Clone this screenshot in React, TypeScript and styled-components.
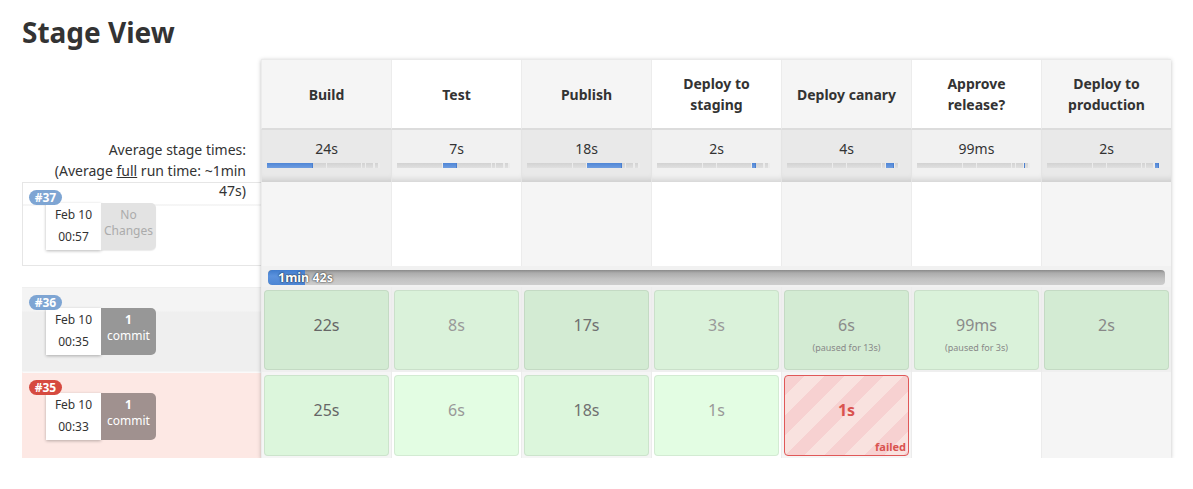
import React from 'react';
import styled, { createGlobalStyle } from 'styled-components';

const GlobalStyle = createGlobalStyle`
  html, body { margin: 0; padding: 0; background: #fff; }
  body { font-family: "Noto Sans", "Open Sans", sans-serif; color: #333; }
`;

type Stage = { name: React.ReactNode; avg: string; seg: number };
const stages: Stage[] = [
  { name: 'Build', avg: '24s', seg: 0 },
  { name: 'Test', avg: '7s', seg: 1 },
  { name: 'Publish', avg: '18s', seg: 2 },
  { name: <>Deploy to<br />staging</>, avg: '2s', seg: 3 },
  { name: 'Deploy canary', avg: '4s', seg: 4 },
  { name: <>Approve<br />release?</>, avg: '99ms', seg: 5 },
  { name: <>Deploy to<br />production</>, avg: '2s', seg: 6 },
];
const segWidths = [46, 14, 35, 4, 8, 1, 4, 1];

type Cell =
  | { kind: 'ok'; t: string; c: string; paused?: string }
  | { kind: 'failed'; t: string }
  | { kind: 'empty' };

type Run = {
  id: string;
  failed?: boolean;
  date: string;
  time: string;
  changes: 'none' | 'commit';
  tone: 'white' | 'gray' | 'pink';
  height: number;
  cells: Cell[];
};

const runs: Run[] = [
  {
    id: '#37', date: 'Feb 10', time: '00:57', changes: 'none', tone: 'white', height: 84,
    cells: Array.from({ length: 7 }, () => ({ kind: 'empty' } as Cell)),
  },
  {
    id: '#36', date: 'Feb 10', time: '00:35', changes: 'commit', tone: 'gray', height: 85,
    cells: [
      { kind: 'ok', t: '22s', c: '#666' },
      { kind: 'ok', t: '8s', c: '#999' },
      { kind: 'ok', t: '17s', c: '#707070' },
      { kind: 'ok', t: '3s', c: '#999' },
      { kind: 'ok', t: '6s', c: '#8a8a8a', paused: '(paused for 13s)' },
      { kind: 'ok', t: '99ms', c: '#8a8a8a', paused: '(paused for 3s)' },
      { kind: 'ok', t: '2s', c: '#888' },
    ],
  },
  {
    id: '#35', failed: true, date: 'Feb 10', time: '00:33', changes: 'commit', tone: 'pink', height: 86,
    cells: [
      { kind: 'ok', t: '25s', c: '#666' },
      { kind: 'ok', t: '6s', c: '#999' },
      { kind: 'ok', t: '18s', c: '#707070' },
      { kind: 'ok', t: '1s', c: '#999' },
      { kind: 'failed', t: '1s' },
      { kind: 'empty' },
      { kind: 'empty' },
    ],
  },
];

const Page = styled.div`
  padding: 14px 22px 0 22px;
`;

const Title = styled.h2`
  margin: 0 0 9px 0;
  font-size: 28px;
  line-height: 36px;
  font-weight: 700;
  color: #333;
`;

const Main = styled.div`
  display: flex;
  align-items: flex-start;
`;

const LeftCol = styled.div`
  width: 239px;
  display: flex;
  flex-direction: column;
  flex-shrink: 0;
`;

const Spacer = styled.div<{ $h: number }>`
  height: ${(p) => p.$h}px;
`;

const AvgLabel = styled.div`
  position: relative;
  z-index: 2;
  height: 52px;
  box-sizing: border-box;
  padding: 10px 15px 0 0;
  text-align: right;
  font-size: 14px;
  line-height: 20.5px;
  color: #333;
  overflow: visible;
  white-space: nowrap;
  u { text-decoration: underline; }
`;

const toneBg: Record<Run['tone'], string> = {
  white: 'linear-gradient(to bottom, #fff 0, #fff 21px, #ececec 22px, #fff 23px, #fff 100%)',
  gray: 'linear-gradient(to bottom, #f4f4f4 0, #f4f4f4 23px, #efefef 24px, #efefef 100%)',
  pink: '#fde8e4',
};

const RunInfo = styled.div<{ $tone: Run['tone']; $h: number }>`
  height: ${(p) => p.$h}px;
  box-sizing: border-box;
  background: ${(p) => toneBg[p.$tone]};
  border: 1px solid ${(p) => (p.$tone === 'white' ? '#e6e6e6' : 'transparent')};
  border-right: none;
  border-top-color: ${(p) => (p.$tone === 'pink' ? '#fafafa' : p.$tone === 'white' ? '#e6e6e6' : 'transparent')};
  padding: 7px 0 0 6px;
  display: flex;
  flex-direction: column;
  align-items: flex-start;
`;

const Badge = styled.div<{ $failed?: boolean }>`
  position: relative;
  z-index: 1;
  width: 33px;
  height: 15px;
  border-radius: 8px;
  background: ${(p) => (p.$failed ? '#d64a40' : '#7ea5d3')};
  color: #fff;
  font-size: 12px;
  font-weight: 700;
  line-height: 15px;
  text-align: center;
`;

const BuildBoxes = styled.div`
  display: flex;
  margin: -2px 0 0 17px;
`;

const DateBox = styled.div`
  width: 55px;
  height: 47px;
  box-sizing: border-box;
  background: #fff;
  box-shadow: 0 1px 3px rgba(0, 0, 0, 0.28);
  padding-top: 1px;
  font-size: 12px;
  line-height: 22px;
  text-align: center;
  color: #333;
`;

const ChangesBox = styled.div<{ $kind: 'none' | 'commit'; $tone: Run['tone'] }>`
  width: 55px;
  height: 47px;
  box-sizing: border-box;
  border-radius: 0 5px 5px 0;
  padding-top: 4px;
  font-size: 12px;
  line-height: 15.5px;
  text-align: center;
  background: ${(p) => (p.$kind === 'none' ? '#e3e3e3' : p.$tone === 'pink' ? '#a0918f' : '#979797')};
  color: ${(p) => (p.$kind === 'none' ? '#ababab' : '#fff')};
  box-shadow: ${(p) => (p.$kind === 'none' ? '0 1px 1px rgba(0,0,0,0.08)' : 'none')};
  b { font-weight: 700; }
`;

const StageTable = styled.div`
  width: 910px;
  display: flex;
  flex-direction: column;
  box-shadow: 0 1px 4px rgba(0, 0, 0, 0.25);
  border-top: 1px solid #eaeaea;
`;

const Row = styled.div<{ $h: number }>`
  display: grid;
  grid-template-columns: repeat(7, 130px);
  height: ${(p) => p.$h}px;
`;

const HeadCell = styled.div<{ $odd: boolean }>`
  box-sizing: border-box;
  border-left: 1px solid #ececec;
  background: ${(p) => (p.$odd ? '#f5f5f5' : '#fff')};
  border-bottom: 2px solid #dcdcdc;
  display: flex;
  align-items: center;
  justify-content: center;
  text-align: center;
  font-size: 14px;
  font-weight: 700;
  line-height: 21px;
  color: #333;
`;

const AvgCell = styled.div<{ $odd: boolean }>`
  box-sizing: border-box;
  border-left: 1px solid #e4e4e4;
  background: ${(p) => (p.$odd ? '#e9e9e9' : '#f1f1f1')};
  box-shadow: inset 0 -7px 6px -5px rgba(0, 0, 0, 0.14);
  padding: 9px 0 0 0;
  display: flex;
  flex-direction: column;
`;

const AvgTime = styled.div`
  text-align: center;
  font-size: 14px;
  line-height: 20px;
  color: #333;
`;

const MiniBar = styled.div`
  margin: 4px 0 0 5px;
  width: 113px;
  height: 5px;
  display: flex;
  background: #d8d8d8;
  box-shadow: inset 0 0 0 1px rgba(0, 0, 0, 0.05);
`;

const Seg = styled.div<{ $active: boolean }>`
  height: 100%;
  box-sizing: border-box;
  flex-shrink: 0;
  background: ${(p) => (p.$active ? 'linear-gradient(#4f86d6, #6f9de0)' : 'linear-gradient(#d2d2d2, #e0e0e0)')};
  border-right: 1px solid ${(p) => (p.$active ? '#4a7fcf' : '#ececec')};
`;

const PlainCell = styled.div<{ $odd: boolean }>`
  box-sizing: border-box;
  border-left: 1px solid #ececec;
  background: ${(p) => (p.$odd ? '#f5f5f5' : '#fff')};
`;

const ProgressRow = styled.div`
  height: 21px;
  box-sizing: border-box;
  padding: 4px 6px 2px 6px;
  background: #f1f1f1;
  border-left: 1px solid #ececec;
`;

const ProgressTrack = styled.div`
  position: relative;
  height: 15px;
  border-radius: 4px;
  background: linear-gradient(#8a8a8a 0, #acacac 20%, #c2c2c2 60%, #cdcdcd 100%);
  overflow: hidden;
`;

const ProgressFill = styled.div`
  height: 100%;
  background: linear-gradient(#3f7bcc, #5b92dd 40%, #4d86d4);
  border-radius: 4px 0 0 4px;
`;

const ProgressText = styled.span`
  position: absolute;
  left: 10px;
  top: 0;
  font-size: 12.5px;
  font-weight: 700;
  line-height: 15px;
  color: #fff;
  text-shadow: 0 0 2px rgba(0, 0, 0, 0.8), 0 0 1px rgba(0, 0, 0, 0.6);
`;

const StageSlot = styled.div<{ $bg: string }>`
  box-sizing: border-box;
  border-left: 1px solid #ececec;
  background: ${(p) => p.$bg};
  padding: 3px 2px 2px 2px;
  display: flex;
`;

const StageBox = styled.div<{ $bg: string; $color: string }>`
  flex: 1;
  box-sizing: border-box;
  border: 1px solid rgba(0, 0, 0, 0.07);
  border-radius: 4px;
  background: ${(p) => p.$bg};
  padding-top: 23px;
  text-align: center;
  color: ${(p) => p.$color};
`;

const Duration = styled.div`
  font-size: 16px;
  line-height: 22px;
`;

const Paused = styled.div`
  margin-top: 6px;
  font-size: 9px;
  line-height: 12px;
  color: #888;
`;

const FailedBox = styled.div`
  flex: 1;
  position: relative;
  box-sizing: border-box;
  border: 1px solid #e05858;
  border-radius: 4px;
  background: repeating-linear-gradient(135deg, #f7d1d1 0, #f7d1d1 14px, #f9e2df 14px, #f9e2df 28px);
  padding-top: 23px;
  text-align: center;
  color: #d9534f;
  font-weight: 700;
`;

const FailedTag = styled.span`
  position: absolute;
  right: 2px;
  bottom: 1px;
  font-size: 11px;
  line-height: 14px;
  font-weight: 700;
  color: #d9534f;
`;

const greens: Record<string, [string, string]> = {
  gray: ['#d3ebd3', '#daf2da'],
  pink: ['#dcf6dc', '#e3fde3'],
};

function StageCell({ cell, idx, run }: { cell: Cell; idx: number; run: Run }) {
  const odd = idx % 2 === 0;
  const slotBg = run.tone === 'gray' ? '#efefef' : odd ? '#f5f5f5' : '#fff';
  if (cell.kind === 'empty') return <PlainCell $odd={odd} />;
  if (cell.kind === 'failed')
    return (
      <StageSlot $bg={slotBg}>
        <FailedBox>
          <Duration>{cell.t}</Duration>
          <FailedTag>failed</FailedTag>
        </FailedBox>
      </StageSlot>
    );
  const g = greens[run.tone];
  return (
    <StageSlot $bg={slotBg}>
      <StageBox $bg={odd ? g[0] : g[1]} $color={cell.c}>
        <Duration>{cell.t}</Duration>
        {cell.paused && <Paused>{cell.paused}</Paused>}
      </StageBox>
    </StageSlot>
  );
}

export default function App() {
  return (
    <>
      <GlobalStyle />
      <Page>
        <Title>Stage View</Title>
        <Main>
          <LeftCol>
            <Spacer $h={71} />
            <AvgLabel>
              Average stage times:
              <br />
              (Average <u>full</u> run time: ~1min
              <br />
              47s)
            </AvgLabel>
            {runs.map((r, i) => (
              <React.Fragment key={r.id}>
                <RunInfo $tone={r.tone} $h={r.height}>
                  <Badge $failed={r.failed}>{r.id}</Badge>
                  <BuildBoxes>
                    <DateBox>
                      {r.date}
                      <br />
                      {r.time}
                    </DateBox>
                    <ChangesBox $kind={r.changes} $tone={r.tone}>
                      {r.changes === 'none' ? (
                        <>
                          No
                          <br />
                          Changes
                        </>
                      ) : (
                        <>
                          <b>1</b>
                          <br />
                          commit
                        </>
                      )}
                    </ChangesBox>
                  </BuildBoxes>
                </RunInfo>
                {i === 0 && <Spacer $h={21} />}
              </React.Fragment>
            ))}
          </LeftCol>
          <StageTable>
            <Row $h={70}>
              {stages.map((s, i) => (
                <HeadCell key={i} $odd={i % 2 === 0}>
                  {s.name}
                </HeadCell>
              ))}
            </Row>
            <Row $h={52}>
              {stages.map((s, i) => (
                <AvgCell key={i} $odd={i % 2 === 0}>
                  <AvgTime>{s.avg}</AvgTime>
                  <MiniBar>
                    {segWidths.map((w, j) => (
                      <Seg key={j} $active={j === s.seg} style={{ width: w }} />
                    ))}
                  </MiniBar>
                </AvgCell>
              ))}
            </Row>
            {runs.map((r, i) => (
              <React.Fragment key={r.id}>
                <Row $h={r.height}>
                  {r.cells.map((c, j) => (
                    <StageCell key={j} cell={c} idx={j} run={r} />
                  ))}
                </Row>
                {i === 0 && (
                  <ProgressRow>
                    <ProgressTrack>
                      <ProgressFill style={{ width: 37 }} />
                      <ProgressText>1min 42s</ProgressText>
                    </ProgressTrack>
                  </ProgressRow>
                )}
              </React.Fragment>
            ))}
          </StageTable>
        </Main>
      </Page>
    </>
  );
}
